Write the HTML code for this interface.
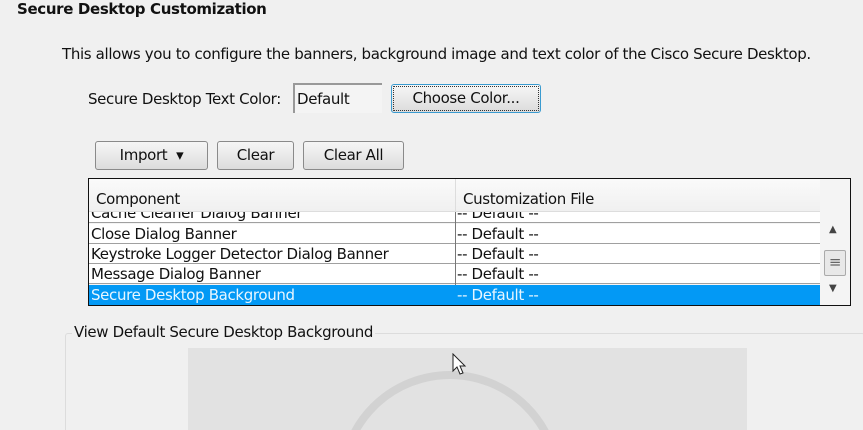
<!DOCTYPE html>
<html><head><style>
*{margin:0;padding:0;box-sizing:border-box}
html,body{width:863px;height:430px;overflow:hidden}
body{background:#f0f0f0;font-family:"DejaVu Sans","Liberation Sans",sans-serif;font-size:15px;color:#111;position:relative;letter-spacing:-0.35px}
.a{position:absolute;white-space:nowrap}
.btn{position:absolute;border:1px solid #8a8a8a;border-radius:3px;background:linear-gradient(#f6f6f6,#dcdcdc);text-align:center;line-height:27px;height:29px}
.row{position:absolute;left:89px;width:731px;height:20px;border-bottom:1px solid #a0a0a0;background:#fff;line-height:21px}
.row span{position:absolute}
</style></head><body>
<div class="a" style="left:17px;top:0px;font-weight:bold;font-size:15px">Secure Desktop Customization</div>
<div class="a" style="left:62px;top:45px">This allows you to configure the banners, background image and text color of the Cisco Secure Desktop.</div>
<div class="a" style="left:88px;top:90px">Secure Desktop Text Color:</div>
<div class="a" style="left:293px;top:83px;width:89px;height:30px;border-top:2px solid #999;border-left:2px solid #999;background:#f4f4f4;padding:5px 2px">Default</div>
<div class="btn" style="left:391px;top:84px;width:150px;border:1px solid #3a9bd0;outline:1px dotted #333;outline-offset:-3px">Choose Color...</div>
<div class="btn" style="left:95px;top:141px;width:113px">Import &nbsp;▾</div>
<div class="btn" style="left:217px;top:141px;width:77px">Clear</div>
<div class="btn" style="left:303px;top:141px;width:101px">Clear All</div>
<div class="a" style="left:88px;top:178px;width:763px;height:128px;border:1px solid #111;background:#f4f4f4"></div>
<div class="a" style="left:89px;top:179px;width:731px;height:33px;background:linear-gradient(#fafafa,#f0f0f0);border-bottom:1px solid #ddd"></div>
<div class="a" style="left:455px;top:179px;width:1px;height:33px;background:#ddd"></div>
<div class="a" style="left:96px;top:190px">Component</div>
<div class="a" style="left:463px;top:190px">Customization File</div>
<div class="row" style="top:212px;height:11px;overflow:hidden"><span style="left:2px;top:-9px">Cache Cleaner Dialog Banner</span><span style="left:368px;top:-9px">-- Default --</span></div>
<div class="row" style="top:224px"><span style="left:2px">Close Dialog Banner</span><span style="left:368px">-- Default --</span></div>
<div class="row" style="top:244px"><span style="left:2px">Keystroke Logger Detector Dialog Banner</span><span style="left:368px">-- Default --</span></div>
<div class="row" style="top:264px"><span style="left:2px">Message Dialog Banner</span><span style="left:368px">-- Default --</span></div>
<div class="row" style="top:285px;background:#0399f5;color:#e8f6ff;border:none"><span style="left:2px">Secure Desktop Background</span><span style="left:368px">-- Default --</span></div>
<div class="a" style="left:455px;top:212px;width:1px;height:73px;background:#777"></div>
<div class="a" style="left:829px;top:224px;font-size:10px;color:#444">▲</div>
<div class="a" style="left:824px;top:250px;width:22px;height:26px;border:1px solid #aaa;border-radius:2px;background:#e8e8e8;text-align:center;line-height:22px;color:#666">≡</div>
<div class="a" style="left:829px;top:283px;font-size:10px;color:#444">▼</div>
<div class="a" style="left:65px;top:333px;width:800px;height:97px;border:1px solid #dcdcdc;border-bottom:none;border-radius:3px 3px 0 0"></div>
<div class="a" style="left:72px;top:323px;background:#f0f0f0;padding:0 2px">View Default Secure Desktop Background</div>
<div class="a" style="left:188px;top:348px;width:559px;height:82px;background:#e2e2e2;overflow:hidden">
<svg width="559" height="82"><circle cx="262" cy="135" r="108" fill="none" stroke="#d2d2d2" stroke-width="8"/><circle cx="262" cy="160" r="70" fill="none" stroke="#d4d4d4" stroke-width="6"/></svg></div>
<svg class="a" style="left:452px;top:353px" width="16" height="24"><path d="M1 1 L1 18 L5 14 L8 21 L11 20 L8 13 L13 13 Z" fill="#fff" stroke="#222" stroke-width="1"/></svg>
</body></html>
